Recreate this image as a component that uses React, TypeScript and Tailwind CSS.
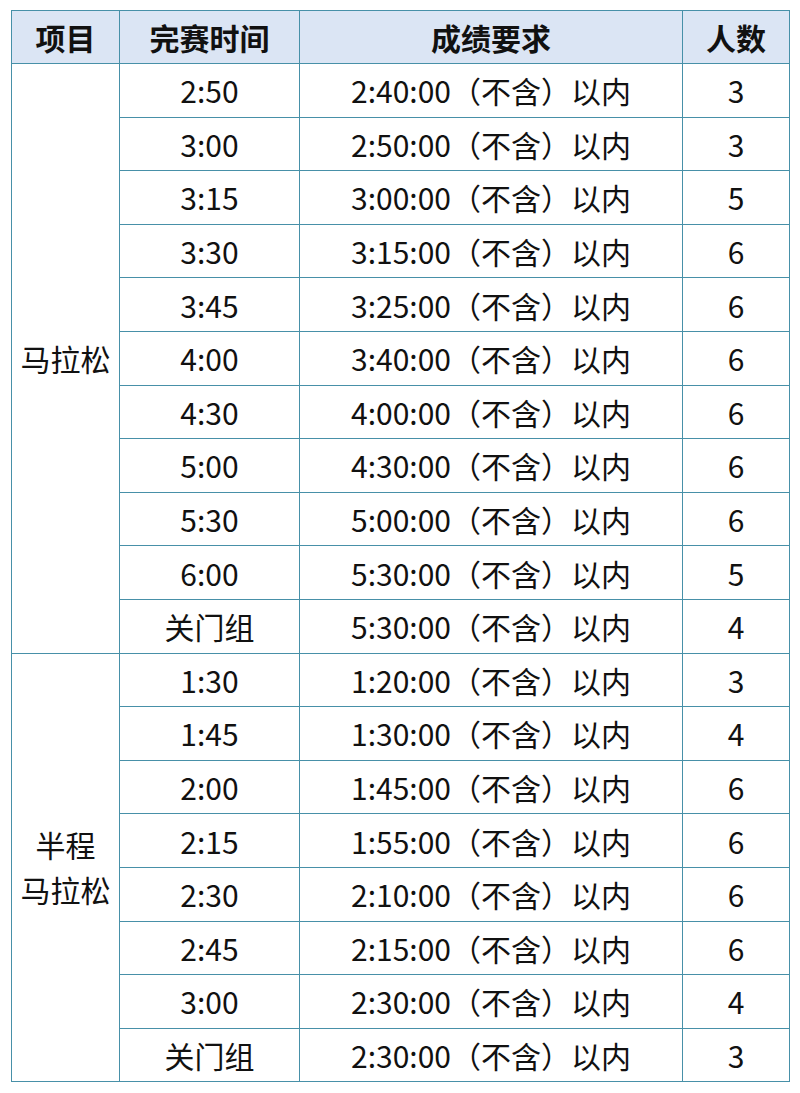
const marathon = [
  ["2:50", "2:40:00", "3"],
  ["3:00", "2:50:00", "3"],
  ["3:15", "3:00:00", "5"],
  ["3:30", "3:15:00", "6"],
  ["3:45", "3:25:00", "6"],
  ["4:00", "3:40:00", "6"],
  ["4:30", "4:00:00", "6"],
  ["5:00", "4:30:00", "6"],
  ["5:30", "5:00:00", "6"],
  ["6:00", "5:30:00", "5"],
  ["关门组", "5:30:00", "4"],
];

const half = [
  ["1:30", "1:20:00", "3"],
  ["1:45", "1:30:00", "4"],
  ["2:00", "1:45:00", "6"],
  ["2:15", "1:55:00", "6"],
  ["2:30", "2:10:00", "6"],
  ["2:45", "2:15:00", "6"],
  ["3:00", "2:30:00", "4"],
  ["关门组", "2:30:00", "3"],
];

const cell = "border-[1.5px] border-[#4790a8] text-center align-middle p-0";

function Group({ label, rows }: { label: React.ReactNode; rows: string[][] }) {
  return (
    <>
      {rows.map((r, i) => (
        <tr key={i} className="h-[53.6px]">
          {i === 0 && (
            <td rowSpan={rows.length} className={cell + " leading-[45px]"}>
              {label}
            </td>
          )}
          <td className={cell}>{r[0]}</td>
          <td className={cell}>{r[1]}（不含）以内</td>
          <td className={cell}>{r[2]}</td>
        </tr>
      ))}
    </>
  );
}

export default function App() {
  return (
    <div className="w-[800px] h-[1093px] bg-white pt-[10px] pl-[11px] font-['Noto_Sans_CJK_SC','Noto_Sans',sans-serif] text-[#111]">
      <table className="w-[778px] border-collapse table-fixed text-[30px] leading-none">
        <colgroup>
          <col className="w-[108px]" />
          <col className="w-[180px]" />
          <col className="w-[383px]" />
          <col className="w-[107px]" />
        </colgroup>
        <thead>
          <tr className="h-[53px] bg-[#dbe5f4] font-bold text-[30px]">
            <th className={cell}>项目</th>
            <th className={cell}>完赛时间</th>
            <th className={cell}>成绩要求</th>
            <th className={cell}>人数</th>
          </tr>
        </thead>
        <tbody>
          <Group label="马拉松" rows={marathon} />
          <Group
            label={
              <>
                半程
                <br />
                马拉松
              </>
            }
            rows={half}
          />
        </tbody>
      </table>
    </div>
  );
}
